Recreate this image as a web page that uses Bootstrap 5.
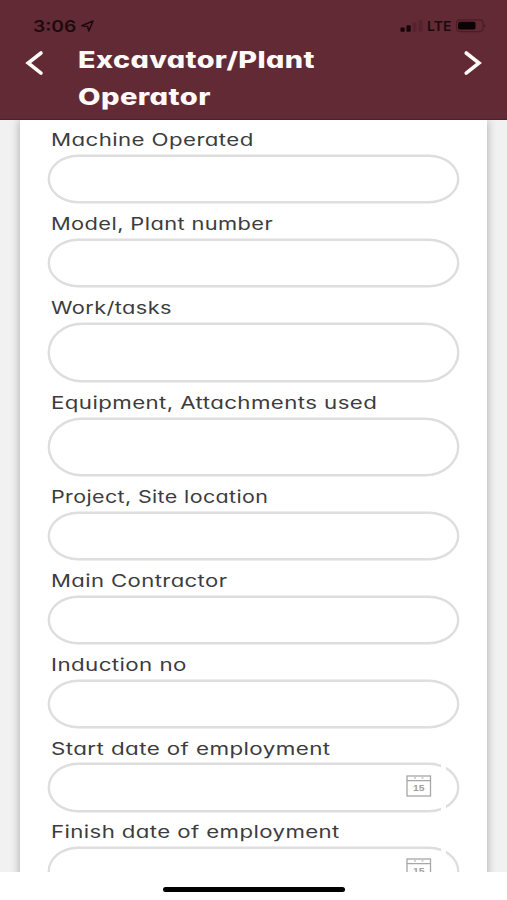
<!DOCTYPE html>
<html lang="en">
<head>
<meta charset="utf-8">
<meta name="viewport" content="width=device-width, initial-scale=1">
<title>Excavator/Plant Operator</title>
<link href="https://cdn.jsdelivr.net/npm/bootstrap@5.3.0/dist/css/bootstrap.min.css" rel="stylesheet">
<style>
body{font-family:Inter,"Open Sans",sans-serif;font-feature-settings:"cv11";color:#3c3c3e;background:#fff}
.screen{width:507px;height:900px}
.app-header{height:120px;background:#622a35;border-bottom:1px solid #4d202b;color:#fffaf8;z-index:2}
.status-line{height:40.5px;padding:9px 21px 0 33px;color:#1c0a0f;font-weight:600}
.clock{font-size:16px;line-height:34px;width:47px}
.net{font-size:13.5px;line-height:34px;width:29px;padding-left:1px}
.locate{margin-top:9px}
.fit{display:inline-block;white-space:nowrap;transform-origin:0 50%;transform:scaleX(var(--fit));letter-spacing:.3px}
.status-line .fit{letter-spacing:0}
.title-line{padding:0 24px 0 25px}
.page-title{font-size:22.5px;font-weight:800;line-height:37.5px;width:380px;padding-left:33px}
.chevron{margin-top:9.5px;flex:none}
.viewport{height:752px;background:#f1f1f1}
.sheet{width:467px;margin-left:20px;padding:0 28px 0 27.5px;background:#fff;box-shadow:0 0 9px rgba(0,0,0,.3)}
.field-label{font-size:17px;line-height:31px;height:36px;padding:6px 0 0 3.5px}
.field-label.first{height:35px;padding-top:5px}
.field-label.close-up{height:35px;padding-top:5.5px}
.pill,.pill:focus{height:48.2px;border:2px solid #dedede;border-radius:30px/24.1px;box-shadow:0 0 0 .4px #dedede;background:#fff}
.pill-tall{height:58.2px;border-radius:34px/29.1px}
.date-gap{width:4.5px;right:13.5px;top:-1px;bottom:-1px;background:#fff}
.cal{right:27px;top:11.5px}
.home-area{height:28px;padding-top:15px}
.home-bar{width:182px;height:5px;background:#000}
</style>
<script src="https://cdn.jsdelivr.net/npm/bootstrap@5.3.0/dist/js/bootstrap.bundle.min.js"></script>
</head>
<body class="overflow-hidden">
<div class="screen d-flex flex-column overflow-hidden">
  <header class="app-header position-relative">
    <div class="status-line d-flex">
      <div class="clock"><span class="fit" style="--fit:1.2">3:06</span></div>
      <svg class="locate" width="15" height="15" viewBox="0 0 15 15"><path d="M1.800 7.800 13 3 8.800 13 7.600 8.400Z" fill="none" stroke="#1c0a0f" stroke-width="1.500" stroke-linejoin="round"/></svg>
      <svg class="ms-auto" width="27" height="34" viewBox="0 0 27 34"><g fill="#14060a"><rect x="1.500" y="18.500" width="4.200" height="4.300" rx="1"/><rect x="7.500" y="16.200" width="4.200" height="6.600" rx="1"/></g><g fill="#54232e"><rect x="13.500" y="13.500" width="4" height="9.300" rx="1"/><rect x="19.500" y="11" width="4" height="11.800" rx="1"/></g></svg>
      <div class="net"><span class="fit" style="--fit:1.04">LTE</span></div>
      <svg width="31" height="34" viewBox="0 0 31 34"><rect x="1.500" y="10.800" width="26.500" height="11.800" rx="3.500" fill="none" stroke="#4b1c27" stroke-width="1.200"/><rect x="3" y="12.800" width="17.500" height="7.800" rx="1.800" fill="#0c0306"/><path d="M29.300 14.800q2 1.800 0 3.800Z" fill="#42161f"/></svg>
    </div>
    <div class="title-line d-flex align-items-start">
      <svg class="chevron" width="20" height="26" viewBox="0 0 20 26"><path d="M16 3 3.200 13 16 23.200" fill="none" stroke="#fffaf8" stroke-width="3.600" stroke-linecap="round"/></svg>
      <h1 class="page-title m-0"><span class="fit" style="--fit:1.28">Excavator/Plant</span><br><span class="fit" style="--fit:1.295">Operator</span></h1>
      <svg class="chevron ms-auto" width="20" height="26" viewBox="0 0 20 26"><path d="M3.200 3 16 13 3.200 23.200" fill="none" stroke="#fffaf8" stroke-width="3.600" stroke-linecap="round"/></svg>
    </div>
  </header>
  <main class="viewport overflow-hidden">
    <form class="sheet">
      <label class="field-label first d-block"><span class="fit" style="--fit:1.31">Machine Operated</span></label>
      <input class="form-control pill" type="text">
      <label class="field-label d-block"><span class="fit" style="--fit:1.285">Model, Plant number</span></label>
      <input class="form-control pill" type="text">
      <label class="field-label d-block"><span class="fit" style="--fit:1.283">Work/tasks</span></label>
      <input class="form-control pill pill-tall" type="text">
      <label class="field-label d-block"><span class="fit" style="--fit:1.311">Equipment, Attachments used</span></label>
      <input class="form-control pill pill-tall" type="text">
      <label class="field-label d-block"><span class="fit" style="--fit:1.262">Project, Site location</span></label>
      <input class="form-control pill" type="text">
      <label class="field-label d-block"><span class="fit" style="--fit:1.3">Main Contractor</span></label>
      <input class="form-control pill" type="text">
      <label class="field-label d-block"><span class="fit" style="--fit:1.314">Induction no</span></label>
      <input class="form-control pill" type="text">
      <label class="field-label close-up d-block"><span class="fit" style="--fit:1.317">Start date of employment</span></label>
      <div class="position-relative">
        <input class="form-control pill" type="text">
        <span class="date-gap position-absolute"></span>
        <svg class="cal position-absolute" width="26" height="22" viewBox="0 0 26 22"><rect x="1" y="1" width="23.500" height="20" fill="none" stroke="#a6a6a6" stroke-width="1.300"/><path d="M1 5.700H24.500M8 3H10M15.500 3H17.500" stroke="#a6a6a6" stroke-width="1.200"/><text x="12.800" y="16.300" text-anchor="middle" textLength="11.500" lengthAdjust="spacingAndGlyphs" font-family="Liberation Sans,sans-serif" font-size="9.500" font-weight="700" fill="#a0a0a0">15</text></svg>
      </div>
      <label class="field-label close-up d-block"><span class="fit" style="--fit:1.307">Finish date of employment</span></label>
      <div class="position-relative">
        <input class="form-control pill" type="text">
        <span class="date-gap position-absolute"></span>
        <svg class="cal position-absolute" width="26" height="22" viewBox="0 0 26 22"><rect x="1" y="1" width="23.500" height="20" fill="none" stroke="#a6a6a6" stroke-width="1.300"/><path d="M1 5.700H24.500M8 3H10M15.500 3H17.500" stroke="#a6a6a6" stroke-width="1.200"/><text x="12.800" y="16.300" text-anchor="middle" textLength="11.500" lengthAdjust="spacingAndGlyphs" font-family="Liberation Sans,sans-serif" font-size="9.500" font-weight="700" fill="#a0a0a0">15</text></svg>
      </div>
    </form>
  </main>
  <footer class="home-area bg-white"><div class="home-bar rounded-pill mx-auto"></div></footer>
</div>
</body>
</html>
